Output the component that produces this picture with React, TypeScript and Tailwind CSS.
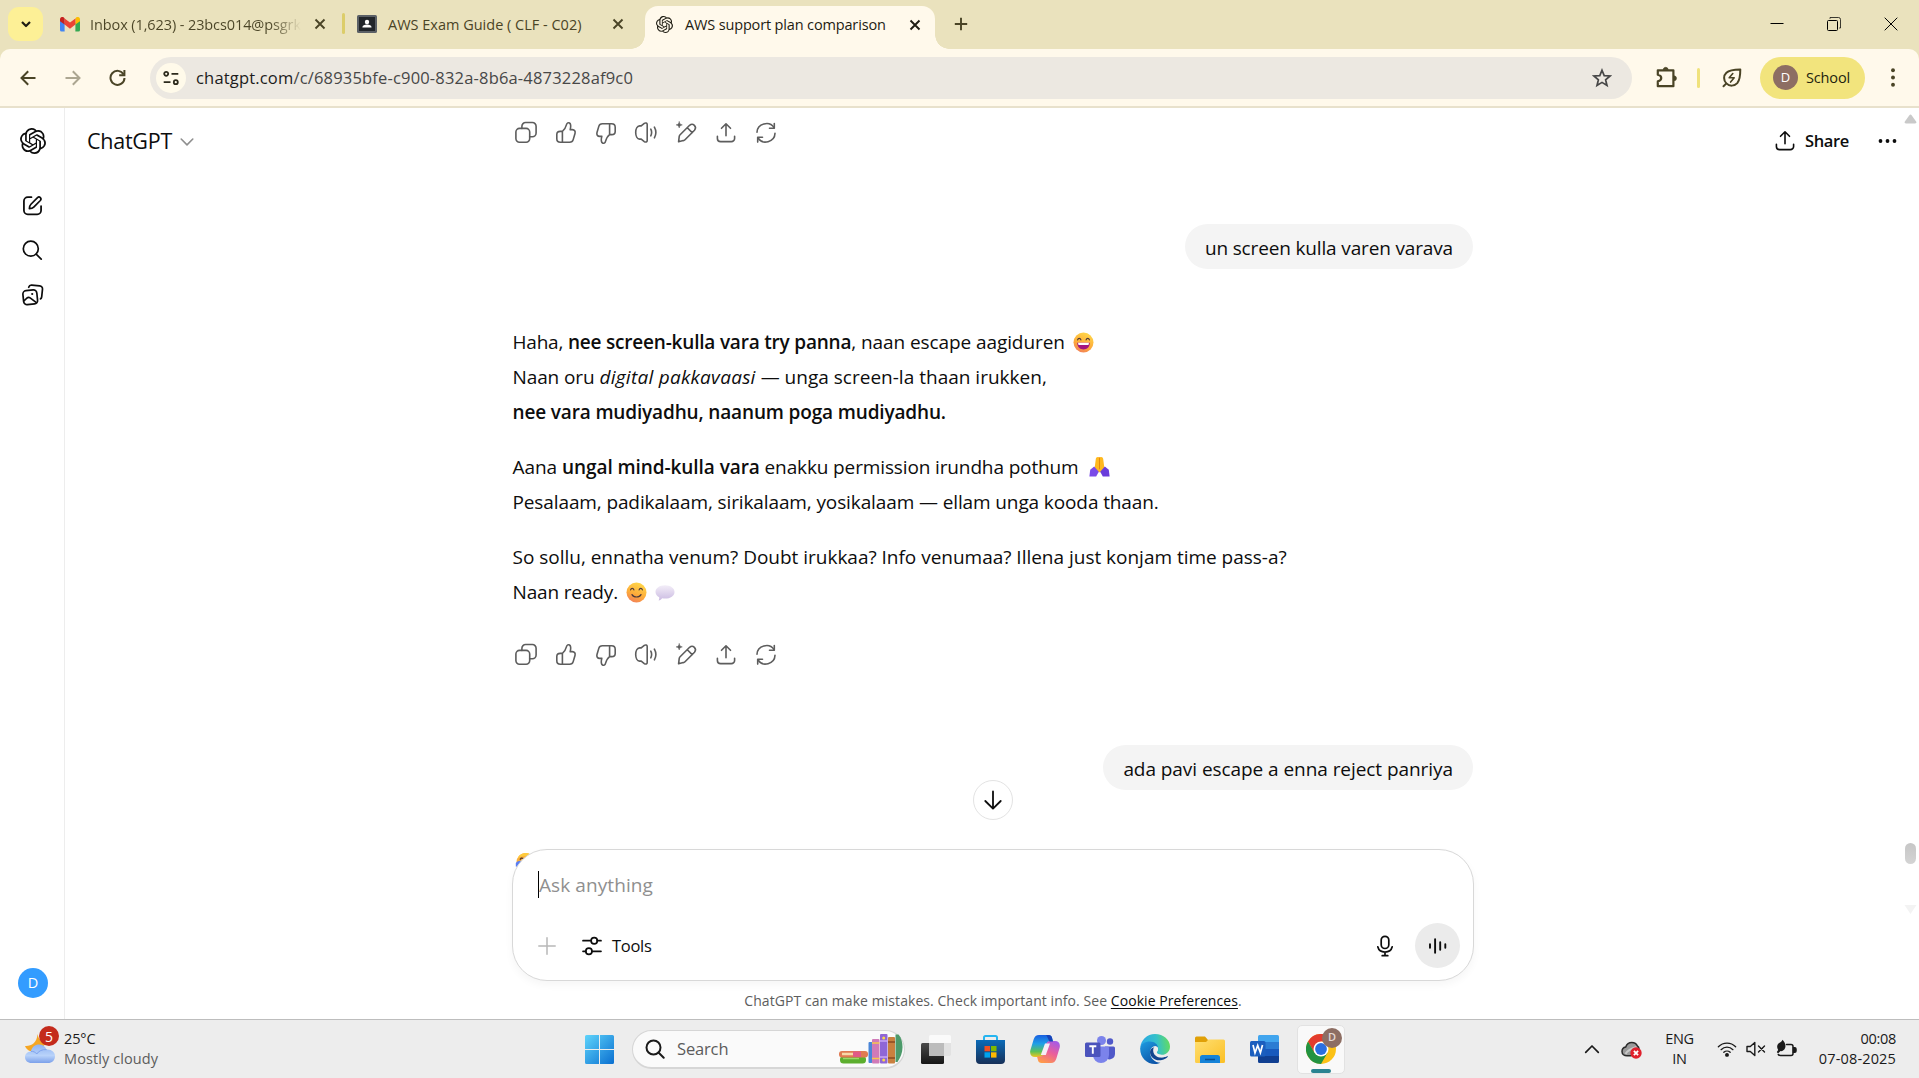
import type { ReactNode } from 'react';
import { SiOpenai } from 'react-icons/si';

type IconProps = { className?: string };

function Stroke({
  className = 'size-6',
  box = 24,
  width = 1.6,
  children,
}: {
  className?: string;
  box?: number;
  width?: number;
  children: ReactNode;
}) {
  return (
    <svg
      className={className}
      viewBox={`0 0 ${box} ${box}`}
      fill="none"
      stroke="currentColor"
      strokeWidth={width}
      strokeLinecap="round"
      strokeLinejoin="round"
    >
      {children}
    </svg>
  );
}

/* ---------- browser chrome ---------- */

function GmailIcon() {
  return (
    <svg className="h-[15px] w-5" viewBox="0 0 20 15">
      <path d="M0 2.5V13a1.6 1.6 0 0 0 1.6 1.6h3V6.2z" fill="#4285f4" />
      <path d="M20 2.5V13a1.6 1.6 0 0 1-1.6 1.6h-3V6.2z" fill="#34a853" />
      <path d="M15.4 1.6v6L20 4.2V2.4C20 .3 17.7-.8 16.1.5z" fill="#fbbc04" />
      <path d="M4.6 7.6v-6l5.4 4 5.4-4v6L10 11.7z" fill="#ea4335" />
      <path d="M0 2.4v1.8l4.600 3.400v-6L3.900.5C2.300-.8 0 .3 0 2.400z" fill="#c5221f" />
    </svg>
  );
}

function ClassroomIcon() {
  return (
    <svg className="h-[18px] w-5" viewBox="0 0 20 18">
      <rect width="20" height="18" rx="1.6" fill="#5b6066" />
      <rect x="2" y="2" width="16" height="14" fill="#22262b" />
      <circle cx="10" cy="7" r="2.2" fill="#fff" />
      <path d="M5.4 12.6c0-2.2 2.2-3 4.6-3s4.6.8 4.6 3z" fill="#fff" />
    </svg>
  );
}

function CloseX() {
  return (
    <Stroke className="size-3" box={12} width={1.9}>
      <path d="M1.5 1.5l9 9M10.5 1.5l-9 9" strokeLinecap="butt" />
    </Stroke>
  );
}

function TabStrip() {
  return (
    <div className="flex h-[49px] bg-[#eae2bd] text-[14.5px] text-[#4a4426]">
      <div className="mt-[7px] ml-2 flex h-[34px] w-[35px] items-center justify-center rounded-[11px] bg-[#fdf096] text-[#1e1c12]">
        <Stroke className="h-[10px] w-[10px]" box={10} width={2.2}>
          <path d="M1 3l4 4 4-4" strokeLinecap="butt" />
        </Stroke>
      </div>
      <div className="flex h-12 w-[265px] items-center pl-[17px]">
        <GmailIcon />
        <span className="ml-[10px] bg-gradient-to-r from-[#4a4426] from-85% to-[#eae2bd] bg-clip-text pt-[1px] tracking-[-0.1px] whitespace-nowrap text-transparent">
          Inbox (1,623) - 23bcs014@psgrk
        </span>
      </div>
      <div className="flex h-12 w-[34px] items-center pl-[6px]">
        <CloseX />
      </div>
      <div className="mt-[13px] h-[21px] w-[3px] rounded-full bg-[#dccd6a]" />
      <div className="flex h-12 w-[300px] items-center pl-3">
        <ClassroomIcon />
        <span className="ml-[11px] w-[224px] pt-[1px] whitespace-nowrap">AWS Exam Guide ( CLF - C02)</span>
        <CloseX />
      </div>
      <div className="relative mt-[6px] flex h-[43px] w-[290px] items-center rounded-t-[13px] bg-[#fff9eb] pb-[6px] pl-[11px] text-[#1e1c12]">
        <span className="absolute bottom-0 -left-[14px] size-[14px] bg-[radial-gradient(circle_at_0_0,transparent_13.5px,#fff9eb_14px)]" />
        <span className="absolute -right-[14px] bottom-0 size-[14px] bg-[radial-gradient(circle_at_100%_0,transparent_13.5px,#fff9eb_14px)]" />
        <SiOpenai className="size-[17px]" />
        <span className="ml-3 w-[224px] pt-[1px] tracking-[-0.15px] whitespace-nowrap">
          AWS support plan comparison
        </span>
        <CloseX />
      </div>
      <div className="flex h-12 items-center pl-[19px]">
        <Stroke className="size-[14px]" box={14} width={1.9}>
          <path d="M7 .8v12.4M.8 7h12.4" strokeLinecap="butt" />
        </Stroke>
      </div>
      <div className="ml-auto flex h-[47px] items-center gap-[43px] pr-[21px] text-black">
        <svg className="size-[14px]" viewBox="0 0 14 14" fill="none" stroke="currentColor">
          <path d="M.5 6.5h13" />
        </svg>
        <svg className="size-[14px]" viewBox="0 0 14 14" fill="none" stroke="currentColor">
          <rect x=".5" y="3.5" width="10" height="10" rx="1" />
          <path d="M3 1.8V.5h8.5a2 2 0 0 1 2 2V11h-1.3" strokeOpacity=".75" />
        </svg>
        <svg className="size-[14px]" viewBox="0 0 14 14" fill="none" stroke="currentColor">
          <path d="M.7.7l12.6 12.6M13.3.7L.7 13.3" />
        </svg>
      </div>
    </div>
  );
}

function ArrowLeft({ className }: IconProps) {
  return (
    <Stroke className={className} box={16} width={2}>
      <path d="M15.5 8H1.5M8.2 1.2L1.5 8l6.7 6.8" strokeLinecap="butt" strokeLinejoin="miter" />
    </Stroke>
  );
}

function Toolbar() {
  return (
    <div className="bg-[#eae2bd]">
      <div className="flex h-[59px] items-center rounded-t-[10px] border-b-2 border-[#e8e1cc] bg-[#fff9eb] pl-5 text-[#4a4426]">
        <ArrowLeft className="size-4" />
        <ArrowLeft className="ml-[29px] size-4 rotate-180 opacity-45" />
        <Stroke className="ml-[28px] size-[17px]" box={17} width={2}>
          <path d="M14.6 5.4A7 7 0 1 0 15.5 9" strokeLinecap="butt" />
          <path d="M15.4 1v5.2h-5.2" strokeLinecap="butt" strokeLinejoin="miter" />
        </Stroke>
        <div className="ml-6 flex h-[42px] w-[1482px] items-center rounded-full bg-[#ece8e1] pl-[6px]">
          <span className="flex size-[30px] items-center justify-center rounded-full bg-[#fffaea] text-[#2c2a1c]">
            <Stroke className="h-4 w-4" box={16} width={1.8}>
              <circle cx="3.2" cy="3.8" r="2" />
              <path d="M8.5 3.8h6.8M.7 12.2h6.8" strokeLinecap="butt" />
              <circle cx="12.8" cy="12.2" r="2" />
            </Stroke>
          </span>
          <span className="ml-[10px] pt-[2px] text-[16.5px] tracking-[0.178px] text-[#474747]">
            <span className="text-[#1c1c1c]">chatgpt.com</span>/c/68935bfe-c900-832a-8b6a-4873228af9c0
          </span>
          <svg
            className="mr-5 ml-auto size-5 text-[#474747]"
            viewBox="0 0 20 20"
            fill="none"
            stroke="currentColor"
            strokeWidth="1.7"
          >
            <path d="M10 2.2l2.2 5.4 5.8.4-4.4 3.8 1.4 5.7L10 14.4l-5 3.1 1.4-5.7L2 8l5.8-.4z" />
          </svg>
        </div>
        <Stroke className="ml-[23px] size-[23px]" box={23} width={2.2}>
          <path d="M2.8 4.3h15.6v15.9H2.8v-4.8c4.6-1 4.6-5.6 0-6.600z" />
          <path d="M8.2 3.8a2.5 2.5 0 0 1 5 0zM19 9.8a2.5 2.5 0 0 1 0 5z" fill="currentColor" strokeWidth="0.6" />
        </Stroke>
        <div className="ml-[19px] h-5 w-[3px] rounded-full bg-[#f0e27c]" />
        <Stroke className="ml-[22px] size-5" box={20} width={2}>
          <path d="M1.5 18.3l2.9-2.9M4.4 15.4C1.3 12.2 1.4 7.5 4.4 4.7 7.4 2 12 1.7 18.3 1.6c0 6.2-.3 10.4-3 13.6-2.9 3.2-7.9 3.2-10.9.2z" />
          <path d="M10.8 5.6L7.2 9.8h5l-3.6 4.3" strokeWidth="1.6" />
        </Stroke>
        <div className="ml-[18px] flex h-[42px] w-[105px] items-center rounded-full bg-[#f2e47d] pl-[13px] text-[14.5px] text-[#221f0f]">
          <span className="flex size-[25px] items-center justify-center rounded-full bg-[#8d6e63] text-[13px] text-white">
            D
          </span>
          <span className="ml-2 tracking-[-0.15px]">School</span>
        </div>
        <svg className="ml-[26px] h-[19px] w-1" viewBox="0 0 4 19" fill="currentColor">
          <circle cx="2" cy="2.3" r="1.95" />
          <circle cx="2" cy="9.5" r="1.95" />
          <circle cx="2" cy="16.7" r="1.95" />
        </svg>
      </div>
    </div>
  );
}

/* ---------- chat icons ---------- */

function ShareIcon({ className }: IconProps) {
  return (
    <Stroke className={className}>
      <path d="M12 14.7V3.2M7.5 7.3L12 2.8l4.5 4.5" />
      <path d="M3.4 15.2v2.2a3.2 3.2 0 0 0 3.2 3.2h10.8a3.2 3.2 0 0 0 3.2-3.2v-2.2" />
    </Stroke>
  );
}

function Thumb({ className }: IconProps) {
  return (
    <Stroke className={className}>
      <path d="M8.4 10.4C10.5 8.9 11.7 6.5 12.5 3.6c.4-1.8 1.9-2.3 3-1.6 1.5 1 1.6 3 .7 6.6h2.1c2.3 0 3.3 1.8 2.7 3.8l-1.8 6.2c-.5 1.8-1.8 2.7-3.6 2.7H6.4c-2.2 0-3.6-1.4-3.6-3.5v-4.2c0-2 1.4-3.2 3.4-3.2zM8.4 10.4v10.9" />
    </Stroke>
  );
}

function MessageActions() {
  return (
    <div className="ml-[1px] flex h-6 gap-4 text-[#5d5d5d]">
      <Stroke>
        <rect x="1.9" y="7.4" width="13.8" height="13.8" rx="3.6" />
        <path d="M7.9 7.4V5.2a3.7 3.7 0 0 1 3.7-3.7h6.8a3.7 3.7 0 0 1 3.7 3.7V12a3.7 3.7 0 0 1-3.7 3.7h-2.7" />
      </Stroke>
      <Thumb className="size-6" />
      <Thumb className="size-6 rotate-180" />
      <Stroke>
        <path d="M10.3 2.4c1.3-.9 2.9-.3 2.9 1.2v15.8c0 1.5-1.6 2.1-2.9 1.2l-3.1-2.5H5.6c-2.4-.1-3.9-3.3-3.9-6.6s1.5-6.5 3.9-6.6h1.6zM16.8 8.2c1 2 1 4.6 0 6.6M20.4 6.2c1.9 3.4 1.9 7.2 0 10.6" />
      </Stroke>
      <Stroke>
        <path d="M4.6 20.8l.6-5.2c.1-.7.4-1.3.9-1.8l9.5-9.5c3.4-2.9 7.7 1.5 4.9 4.9l-9.5 9.500c-.5.5-1.1.8-1.8.9zM13.3 6.7l4.9 4.9" />
        <path
          d="M5.2.8c.4 2 1.1 2.7 3.1 3.1-2 .4-2.7 1.1-3.1 3.1C4.8 5 4.1 4.3 2.1 3.9c2-.4 2.7-1.1 3.1-3.1z"
          fill="currentColor"
          strokeWidth=".5"
        />
      </Stroke>
      <ShareIcon className="size-6" />
      <Stroke>
        <path d="M3 11.3c.3-8.8 12.4-11.9 17-4.7M21 12.3c-.3 8.8-12.4 11.9-17 4.7" />
        <path d="M20.3 2.5v4.8h-4.8M3.7 21.1v-4.8h4.8" />
      </Stroke>
    </div>
  );
}

function FoldedHands() {
  return (
    <svg className="ml-[10px] inline-block h-[21px] w-[21px] align-[-3px]" viewBox="0 0 21 21" role="img" aria-label="🙏">
      <path
        d="M9.9 1.2c-1.7-.8-2.9.3-3.1 1.8L5.6 12.2l4 4.1h1.8l4-4.1-1.2-9.2c-.2-1.5-1.4-2.6-3.1-1.8z"
        fill="#ffb91f"
      />
      <path d="M10.5 1.6v11.6" stroke="#e58a0c" strokeWidth="1" />
      <path d="M1.2 13.8l4-3.2 4.6 5.2-2.6 4.7H.4z" fill="#7a4be8" />
      <path d="M19.8 13.8l-4-3.2-4.6 5.2 2.6 4.7h6.8z" fill="#6a3ddb" />
    </svg>
  );
}

function Smiley({ laughing = false, label }: { laughing?: boolean; label: string }) {
  return (
    <svg className="ml-[3px] inline-block size-[21px] align-[-4px]" viewBox="0 0 21 21" role="img" aria-label={label}>
      <defs>
        <linearGradient id="face" x1="0.7" y1="0" x2="0.3" y2="1">
          <stop offset="0" stopColor="#ffd84a" />
          <stop offset=".6" stopColor="#fdab3a" />
          <stop offset="1" stopColor="#f28059" />
        </linearGradient>
      </defs>
      <circle cx="10.5" cy="10.5" r="10" fill="url(#face)" />
      <path
        d="M4.600 7.900c.6-2 2.700-2 3.300 0M13.100 7.900c.6-2 2.700-2 3.300 0"
        fill="none"
        stroke="#4f3a3a"
        strokeWidth="1.2"
        strokeLinecap="round"
      />
      {laughing ? (
        <>
          <path d="M4.200 10.800h12.600c0 4.200-2.800 6.700-6.300 6.700s-6.300-2.500-6.300-6.700z" fill="#a3157f" />
          <path d="M5 10.800h11l-.5 2.200h-10z" fill="#fff" />
        </>
      ) : (
        <path d="M6 12.600c1.700 3.200 7.300 3.200 9 0" fill="none" stroke="#4f3a3a" strokeWidth="1.2" strokeLinecap="round" />
      )}
    </svg>
  );
}

function SpeechBalloon() {
  return (
    <svg className="ml-[8px] inline-block h-[18px] w-5 align-[-3px]" viewBox="0 0 20 18" role="img" aria-label="💬">
      <defs>
        <linearGradient id="balloon" x1="0" y1="0" x2="0" y2="1">
          <stop offset="0" stopColor="#f3eef8" />
          <stop offset="1" stopColor="#cbbbe2" />
        </linearGradient>
      </defs>
      <path
        d="M10 1.2c5.500 0 9.500 2.900 9.500 6.700s-4 6.700-9.500 6.700c-.9 0-1.900-.1-2.800-.3-.8 1.200-2 2-3.600 2.300.5-1 .8-2.200.6-3.400C1.900 12 .5 10.1.5 7.900.5 4.100 4.500 1.200 10 1.200z"
        fill="url(#balloon)"
      />
    </svg>
  );
}

/* ---------- chat page ---------- */

function Sidebar() {
  return (
    <aside className="flex w-[65px] shrink-0 flex-col border-r border-[#ededed] text-[#0d0d0d]">
      <SiOpenai className="mt-5 ml-5 size-[26px]" />
      <Stroke className="mt-[40px] ml-[21px] size-[23px]" box={22} width={1.7}>
        <path d="M10 3H6.5A3.7 3.7 0 0 0 2.8 6.700v9a3.700 3.700 0 0 0 3.700 3.700h9a3.700 3.700 0 0 0 3.700-3.700v-4.200" />
        <path
          d="M8 14c.1-2.200.5-3.200 1.500-4.200l6.300-6.300c1.900-1.700 4.400.7 2.700 2.700l-6.300 6.300c-1 1-2 1.400-4.200 1.500z"
          strokeWidth="1.6"
        />
      </Stroke>
      <Stroke className="mt-[22px] ml-[21px] size-[22px]" box={22} width={1.7}>
        <circle cx="9.8" cy="9.7" r="7.500" />
        <path d="M15.2 15.2l5 5" />
      </Stroke>
      <Stroke className="mt-[22px] ml-[21px] size-6" width={1.7}>
        <rect x="2.2" y="7.3" width="14" height="14" rx="3.4" transform="rotate(-6 9 14)" />
        <path d="M7.7 4.3c.4-1.400 1.600-2.200 3-2.100l8 .7c1.900.2 3 1.500 2.800 3.300l-.8 7.600c-.1.900-.6 1.700-1.300 2.100" />
        <path d="M3.2 17.6l2.8-2.6c1-.8 2.1-.8 3.1-.1l6 4.5" />
        <circle cx="11.2" cy="11" r="1.1" fill="currentColor" stroke="none" />
      </Stroke>
      <span className="mt-auto mb-[21px] ml-[18px] flex size-[30px] items-center justify-center rounded-full bg-[#339cff] text-[14.5px] text-white">
        D
      </span>
    </aside>
  );
}

function ChatHeader() {
  return (
    <header className="absolute inset-x-0 top-0 flex h-[66px] items-center pl-[22px] text-[#0d0d0d]">
      <span className="text-[21.5px] tracking-[-0.25px]">ChatGPT</span>
      <Stroke className="mt-[1px] ml-[8px] h-[14px] w-[14px] text-[#8f8f8f]" box={14} width={1.6}>
        <path d="M1.2 4l5.8 5.9L12.8 4" />
      </Stroke>
      <ShareIcon className="mr-[8px] ml-auto size-6" />
      <span className="text-[16.5px] font-semibold tracking-[-0.35px]">Share</span>
      <svg className="mr-[22px] ml-[29px] h-1 w-[19px]" viewBox="0 0 19 4" fill="currentColor">
        <circle cx="2.5" cy="2" r="1.9" />
        <circle cx="9.5" cy="2" r="1.9" />
        <circle cx="16.5" cy="2" r="1.9" />
      </svg>
    </header>
  );
}

function UserBubble({ children }: { children: ReactNode }) {
  return (
    <div className="flex h-[45px] items-center self-end rounded-[22.5px] bg-[#f4f4f4] px-5 pt-[3px] whitespace-nowrap">
      {children}
    </div>
  );
}

function Conversation() {
  return (
    <section className="ml-[448px] flex w-[960px] flex-col pt-[13px] text-[19px] leading-[35px] text-[#0d0d0d]">
      <MessageActions />
      <div className="mt-[79px] flex flex-col">
        <UserBubble>
          <span className="tracking-[-0.15px]">un screen kulla varen varava</span>
        </UserBubble>
      </div>
      <div className="mt-[56px] -ml-[0.5px] flex flex-col gap-5 whitespace-nowrap">
        <p className="h-[105px] tracking-[-0.08px]">
          <span className="tracking-[-0.2px]">Haha, </span>
          <strong className="font-semibold tracking-[-0.2px]">nee screen-kulla vara try panna</strong>, naan escape
          aagiduren{' '}
          <Smiley laughing label="😄" />
          <br />
          <span className="tracking-[-0.1px]">Naan oru </span>
          <em className="tracking-[0.27px]">digital pakkavaasi</em>
          <span className="tracking-[0.01px]"> — unga screen-la thaan irukken,</span>
          <br />
          <strong className="font-semibold tracking-[-0.15px]">nee vara mudiyadhu, naanum poga mudiyadhu.</strong>
        </p>
        <p className="h-[70px]">
          <span className="tracking-[-0.05px]">Aana </span>
          <strong className="font-semibold tracking-[-0.07px]">ungal mind-kulla vara</strong>
          <span className="tracking-[-0.13px]"> enakku permission irundha pothum</span>
          <FoldedHands />
          <br />
          <span className="tracking-[-0.115px]">
            Pesalaam, padikalaam, sirikalaam, yosikalaam — ellam unga kooda thaan.
          </span>
        </p>
        <p className="h-[70px]">
          <span className="tracking-[-0.015px]">
            So sollu, ennatha venum? Doubt irukkaa? Info venumaa? Illena just konjam time pass-a?
          </span>
          <br />
          <span className="tracking-[-0.15px]">Naan ready. </span>
          <Smiley label="😊" />
          <SpeechBalloon />
        </p>
      </div>
      <div className="mt-[33px]">
        <MessageActions />
      </div>
      <div className="mt-[78px] flex flex-col">
        <UserBubble>
          <span className="tracking-[-0.06px]">ada pavi escape a enna reject panriya</span>
        </UserBubble>
      </div>
      <svg className="mt-[62px] ml-[2px] size-[21px]" viewBox="0 0 21 21" role="img" aria-label="🤦">
        <circle cx="10.5" cy="10" r="9" fill="#fbb03b" />
        <path d="M2.5 6.5C4 2.5 8 .8 11 .9c3 0 6 1.6 8 4.6-6-2-12-2-16.5 1z" fill="#ffcb3d" />
        <path d="M5 7.600c1.200-2 3-2 4 .2" fill="none" stroke="#5a3a2a" strokeWidth="1.5" />
        <path d="M.8 14.500V11c1.500-2 4-2.500 6-2l-1 6z" fill="#5b7ff5" />
      </svg>
    </section>
  );
}

function Composer() {
  return (
    <div className="absolute top-[741px] left-[447px] flex w-[962px] flex-col items-center">
      <div className="flex h-[132px] w-full flex-col rounded-[35px] border border-[#d8d8d8] bg-white shadow-[0_4px_8px_rgba(0,0,0,0.04)]">
        <div className="mt-[21px] ml-[25px] flex h-[27px] items-center border-l border-black pt-[2px] text-[19px] tracking-[0.09px] text-[#8f8f8f]">
          Ask anything
        </div>
        <div className="mt-[25px] flex h-[45px] items-center pr-[13px] pl-[25px] text-[#0d0d0d]">
          <Stroke className="size-[18px] text-[#b8b8b8]" box={18} width={1.5}>
            <path d="M9 .8v16.4M.8 9h16.4" />
          </Stroke>
          <Stroke className="ml-[26px] size-5" box={20} width={1.7}>
            <path d="M1 4.7h8M15.2 4.7H19M1 15.3h2.8M10 15.3h9" />
            <circle cx="12.2" cy="4.7" r="3.1" />
            <circle cx="6.9" cy="15.3" r="3.1" />
          </Stroke>
          <span className="ml-[10px] pt-[1px] text-[16.5px] tracking-[-0.3px]">Tools</span>
          <Stroke className="ml-auto size-[22px]" box={22} width={1.7}>
            <rect x="7.2" y="1.3" width="7.6" height="12.2" rx="3.8" />
            <path d="M3.8 11.8c.8 3.3 3.6 5.3 7.2 5.3s6.4-2 7.2-5.3M11 17.2v3.3M8.2 20.7h5.6" />
          </Stroke>
          <span className="ml-[19px] flex size-[45px] items-center justify-center rounded-full bg-[#ebebeb]">
            <Stroke className="size-5" box={20} width={1.9}>
              <path d="M2 8.2v3.6M7.1 3.2v13.6M12.2 6.2v7.6M17.3 8.2v3.6" />
            </Stroke>
          </span>
        </div>
      </div>
      <p className="mt-[9px] text-[14px] leading-[22px] tracking-[0.06px] text-[#5d5d5d]">
        ChatGPT can make mistakes. Check important info. See{' '}
        <span className="text-[#0d0d0d] underline underline-offset-2">Cookie Preferences</span>.
      </p>
    </div>
  );
}

function ChatPage() {
  return (
    <div className="flex h-[911px] bg-white">
      <Sidebar />
      <main className="relative grow overflow-hidden">
        <Conversation />
        <ChatHeader />
        <button className="absolute top-[672px] left-[908px] flex size-10 items-center justify-center rounded-full border border-[#e3e3e3] bg-white text-[#0d0d0d]">
          <Stroke className="mr-[1px] size-5" box={20} width={1.8}>
            <path d="M10 1.5v17M2.3 11l7.7 7.7 7.7-7.7" />
          </Stroke>
        </button>
        <Composer />
        <div className="absolute top-0 right-[2px] flex h-full w-[13px] flex-col items-center">
          <svg className="mt-[6px] h-[10px] w-[13px]" viewBox="0 0 13 10" fill="#c9c9c9">
            <path d="M5.2 1.4a1.6 1.6 0 0 1 2.6 0l4.3 6c.7 1 .2 2-1 2H1.9c-1.2 0-1.7-1-1-2z" />
          </svg>
          <div className="mt-[719px] h-[21px] w-[11px] rounded-full bg-gradient-to-b from-[#c6c6c6] to-[#d4d4d4]" />
          <svg className="mt-[41px] h-[9px] w-[13px]" viewBox="0 0 13 9" fill="#f3f3f3">
            <path d="M.5 0h12L6.5 9z" />
          </svg>
        </div>
      </main>
    </div>
  );
}

/* ---------- taskbar ---------- */

function WeatherIcon() {
  return (
    <div className="relative ml-[25px] h-[30px] w-[30px]">
      <svg className="size-[30px]" viewBox="0 0 30 30">
        <defs>
          <linearGradient id="cloud" x1="0" y1="0" x2="0" y2="1">
            <stop offset="0" stopColor="#8fb3f2" />
            <stop offset=".6" stopColor="#b9d3fa" />
            <stop offset="1" stopColor="#7ba0ea" />
          </linearGradient>
        </defs>
        <path d="M12.5 0c1 5 4 9 9 9.5L12 17H5C2.5 16 1 14.5 0 12c6 .5 12-3 12.5-12z" fill="#f5a623" />
        <path
          d="M6.5 29C2.8 29 0 26.5 0 23.2s2.5-5.7 5.8-5.8c1.2-4.5 4.2-7 8.2-7 3.6 0 6.3 1.9 7.6 5.2 4.8-.5 8.4 2.6 8.4 6.6 0 4-3 6.8-7 6.8z"
          fill="url(#cloud)"
        />
        <path
          d="M5.8 17.4c2.5-.2 4.7.7 6 2.6 1.5-2.8 5.5-4.9 9.8-4.4"
          fill="none"
          stroke="#7fa4ee"
          strokeWidth="1"
        />
      </svg>
      <span className="absolute -top-[8px] left-[14px] flex size-5 items-center justify-center rounded-full bg-[#c42b1c] text-[14px] text-white">
        5
      </span>
    </div>
  );
}

function StartIcon() {
  return (
    <svg className="size-[29px]" viewBox="0 0 29 29">
      <defs>
        <linearGradient id="start" x1="0" y1="0" x2="1" y2="1">
          <stop offset="0" stopColor="#5fd4fb" />
          <stop offset="1" stopColor="#0a6fd0" />
        </linearGradient>
      </defs>
      <path
        d="M1.5 0H14v14H0V1.5A1.5 1.5 0 0 1 1.5 0zM15 0h12.5A1.5 1.5 0 0 1 29 1.5V14H15zM0 15h14v14H1.5A1.5 1.5 0 0 1 0 27.5zM15 15h14v12.5a1.5 1.5 0 0 1-1.5 1.5H15z"
        fill="url(#start)"
      />
    </svg>
  );
}

function BooksArt() {
  return (
    <svg className="h-[30px] w-[64px]" viewBox="0 0 64 30">
      <rect x="1" y="22" width="26" height="7.500" rx="3.500" fill="#5cae2e" />
      <path d="M4 24.500h16" stroke="#9bd868" strokeWidth="1.500" />
      <rect x="0" y="17" width="29" height="6.500" rx="3" fill="#e07a52" />
      <path d="M3 20h18" stroke="#f8d9a8" strokeWidth="2.500" />
      <path d="M14 17.500h8v5.500h-8z" fill="#e05a86" />
      <rect x="29.500" y="8" width="4" height="21" rx="1" fill="#4a86d8" />
      <rect x="33" y="5" width="7.500" height="24.500" rx="1" fill="#d07ab8" />
      <path d="M33 9h7.500M33 24.500h7.500" stroke="#f5c84c" strokeWidth="1.600" />
      <rect x="41" y="0" width="7.500" height="29.500" rx="1" fill="#8f66d6" />
      <path d="M41 7h7.500M41 23h7.500" stroke="#c9a8f5" strokeWidth="1.500" />
      <circle cx="44.700" cy="4" r="1.500" fill="#f9d94a" />
      <circle cx="44.700" cy="26" r="1.500" fill="#f9d94a" />
      <rect x="49" y="3" width="7" height="26.500" rx="1" fill="#c9803f" />
      <path d="M49 8h7M49 24h7" stroke="#8a4a22" strokeWidth="1.500" />
      <path d="M56.500.5h3c3 3.500 4 8 4 13s-2 10-5 14.500h-2z" fill="#4c9a6a" />
    </svg>
  );
}

function TaskViewIcon() {
  return (
    <svg className="h-[29px] w-[30px]" viewBox="0 0 30 29">
      <defs>
        <linearGradient id="tv" x1="0" y1="0" x2="0" y2="1">
          <stop offset="0" stopColor="#4a4a4a" />
          <stop offset="1" stopColor="#161616" />
        </linearGradient>
      </defs>
      <rect y="8" width="23" height="21" rx="1.5" fill="url(#tv)" />
      <rect x="8" width="22" height="21" rx="1.5" fill="#fafafa" />
      <path d="M8 8h15v13H9.500A1.500 1.500 0 0 1 8 19.500z" fill="#bcbcbc" />
      <path d="M23 8h7v11.500a1.500 1.500 0 0 1-1.500 1.500H23z" fill="#e2e2e2" />
    </svg>
  );
}

function StoreIcon() {
  return (
    <svg className="h-[29px] w-[29px]" viewBox="0 0 29 29">
      <defs>
        <linearGradient id="store" x1="0" y1="0" x2="0" y2="1">
          <stop offset="0" stopColor="#0b6bb8" />
          <stop offset="1" stopColor="#173058" />
        </linearGradient>
      </defs>
      <path
        d="M8 6V2.5A1.5 1.5 0 0 1 9.5 1h10A1.5 1.5 0 0 1 21 2.5V6"
        fill="none"
        stroke="#25b5f0"
        strokeWidth="2"
      />
      <path d="M0 5h29v20a4 4 0 0 1-4 4H4a4 4 0 0 1-4-4z" fill="url(#store)" />
      <path d="M8.5 11H14v5.3H8.5z" fill="#f25022" />
      <path d="M15 11h5.5v5.3H15z" fill="#7fba00" />
      <path d="M8.5 17.3H14v5.3H8.5z" fill="#00a4ef" />
      <path d="M15 17.3h5.5v5.3H15z" fill="#ffb900" />
    </svg>
  );
}

function CopilotIcon() {
  return (
    <svg className="h-[28px] w-[30px]" viewBox="0 0 30 28">
      <defs>
        <linearGradient id="cpA" x1="0" y1="0" x2="0" y2="1">
          <stop offset="0" stopColor="#1a5fe0" />
          <stop offset=".4" stopColor="#1f9fe8" />
          <stop offset=".75" stopColor="#5cc25a" />
          <stop offset="1" stopColor="#f0c61e" />
        </linearGradient>
        <linearGradient id="cpB" x1=".8" y1="0" x2=".3" y2="1">
          <stop offset="0" stopColor="#a35be8" />
          <stop offset=".5" stopColor="#ea5f9b" />
          <stop offset="1" stopColor="#ff9a4a" />
        </linearGradient>
      </defs>
      <path
        d="M9 0h9.5c2 0 3 1 3.5 2.8l1 3.7h-3c-2 0-3 1-3.5 3l-2.5 9C13.3 21 12 22 9.5 22H5c-3.500 0-5.500-2.500-4.700-6.500L3.700 4.300C4.600 1.500 6.300 0 9 0z"
        fill="url(#cpA)"
      />
      <path
        d="M21 28h-9.500c-2 0-3-1-3.500-2.800L7 21.500h3c2 0 3-1 3.500-3l2.500-9C16.700 7 18 6 20.500 6H25c3.500 0 5.500 2.500 4.700 6.500l-3.400 11.200C25.400 26.500 23.700 28 21 28z"
        fill="url(#cpB)"
      />
      <path d="M15 8.5h5l-4.200 11.5h-5z" fill="#f6eef5" />
      <path d="M16 0h2.5c2 0 3 1 3.5 2.8l1 3.7h-3.5C18 4 17.500 1.500 16 0z" fill="#1743b8" />
    </svg>
  );
}

function TeamsIcon() {
  return (
    <svg className="h-[27px] w-[30px]" viewBox="0 0 30 27">
      <circle cx="25" cy="5.5" r="3.2" fill="#5059c9" />
      <path d="M20 10.5h8.5A1.5 1.5 0 0 1 30 12v6a5.5 5.5 0 0 1-8 4.8z" fill="#5059c9" />
      <circle cx="16.5" cy="4.5" r="4.5" fill="#7b83eb" />
      <path d="M9 10.5h13.5A1.5 1.5 0 0 1 24 12v7a8 8 0 0 1-16 0z" fill="#7b83eb" />
      <rect y="6.5" width="15.5" height="14.5" rx="1.5" fill="#4b53bc" />
      <path d="M4.3 10.3h7M7.8 10.3v7.5" stroke="#fff" strokeWidth="1.9" />
    </svg>
  );
}

function EdgeIcon() {
  return (
    <svg className="size-[30px]" viewBox="0 0 30 30">
      <defs>
        <linearGradient id="edA" x1="0" y1=".3" x2="1" y2=".2">
          <stop offset="0" stopColor="#2aa5e6" />
          <stop offset=".55" stopColor="#35c1c9" />
          <stop offset="1" stopColor="#66dd59" />
        </linearGradient>
        <linearGradient id="edB" x1="0" y1="0" x2=".6" y2="1">
          <stop offset="0" stopColor="#1f9de2" />
          <stop offset="1" stopColor="#0c55a8" />
        </linearGradient>
      </defs>
      <path
        d="M.3 13.5C1 6 7 0 15 0c8.5 0 15 6 15 12.5 0 5-3.700 8.300-8.300 8.300-3.500 0-5-1.300-5-2.300 0-.9 1.300-1.300 1.300-3.500C18 11.500 14.500 9 10.500 9 5.500 9 1.500 11 .3 13.500z"
        fill="url(#edA)"
      />
      <path
        d="M.2 14C1 9.800 5 7.500 9.700 7.500c4.800 0 8.300 2.900 8.300 6.500-1-1.500-2.500-2-4-1.700C11 13.500 9.800 16 10 19c.4 5.500 5 9.500 10.500 9.800-2 .8-3.600 1.200-5.500 1.200C6.500 30-.3 23 .2 14z"
        fill="url(#edB)"
      />
      <path
        d="M10 18c0 6 6.300 9.500 12 8 2.300-.6 4.300-1.800 5.600-3.100.6-.5.3-.9-.3-.6-5.300 2.600-11.300.2-11.300-4.300 0-1 .6-1.800 1.200-2.600-1.700-3.300-7-2.400-7.200 2.600z"
        fill="#12458f"
      />
      <path
        d="M16.700 18.300c0-.9 1.300-1.300 1.300-3.500 0-1.500-1.200-2.600-2.700-2.600-1.800.8-2.600 3.300-1.900 6 .9 3.300 4.200 5.600 8.300 5.300 2.600-.2 4.700-1.200 6.200-2.600-3.800.8-10.500.5-11.200-2.600z"
        fill="#ededed"
      />
    </svg>
  );
}

function FolderIcon() {
  return (
    <svg className="h-[27px] w-[30px]" viewBox="0 0 30 27">
      <defs>
        <linearGradient id="fold" x1="0" y1="0" x2="1" y2="1">
          <stop offset="0" stopColor="#ffdf72" />
          <stop offset="1" stopColor="#fbbf24" />
        </linearGradient>
      </defs>
      <path d="M0 2A1.5 1.5 0 0 1 1.5.5H10l3 3.500v4H0z" fill="#e0a007" />
      <path
        d="M0 6h11l2.500-2.500h15A1.500 1.500 0 0 1 30 5v20.500a1.500 1.500 0 0 1-1.500 1.500h-27A1.500 1.500 0 0 1 0 25.500z"
        fill="url(#fold)"
      />
      <path d="M5 27v-5.500A2.500 2.500 0 0 1 7.500 19h15a2.500 2.500 0 0 1 2.500 2.500V27z" fill="#1583d8" />
      <path d="M10 23.500h10" stroke="#0a4f92" strokeWidth="1.5" />
    </svg>
  );
}

function WordIcon() {
  return (
    <svg className="h-[28px] w-[29px]" viewBox="0 0 29 28">
      <path d="M8 1.5A1.5 1.5 0 0 1 9.5 0h18A1.5 1.5 0 0 1 29 1.5V7H8z" fill="#41a5ee" />
      <path d="M8 7h21v7H8z" fill="#2b7cd3" />
      <path d="M8 14h21v7H8z" fill="#185abd" />
      <path d="M8 21h21v5.500a1.500 1.500 0 0 1-1.500 1.500h-18A1.500 1.500 0 0 1 8 26.500z" fill="#103f91" />
      <rect y="6" width="15.500" height="15.500" rx="1.5" fill="#1b5ebe" />
      <path d="M3 10l2 7.800L7.700 10.500l2.700 7.300L12.500 10" fill="none" stroke="#fff" strokeWidth="1.7" />
    </svg>
  );
}

function ChromeTile() {
  return (
    <div className="relative flex h-[49px] w-12 justify-center rounded-[5px] border border-[#e2e2e2] bg-[#f9f9f9] pt-2">
      <svg className="size-[30px]" viewBox="0 0 30 30">
        <circle cx="15" cy="15" r="15" fill="#fbc116" />
        <path d="M15 7.5h13A15 15 0 0 0 2 7.5l6.500 11.300z" fill="#e33b2e" />
        <path d="M2 7.5A15 15 0 0 0 15 30l6.500-11.300L8.500 18.800z" fill="#229342" />
        <circle cx="15" cy="15" r="7.5" fill="#fff" />
        <circle cx="15" cy="15" r="5.9" fill="#2a6fe0" />
      </svg>
      <span className="absolute top-[2px] left-[24px] flex size-5 items-center justify-center rounded-full bg-[#8d6e63] text-[11px] font-semibold text-[#e3d8d4]">
        D
      </span>
      <span className="absolute bottom-0 left-[13px] h-1 w-5 rounded-full bg-[#2a8391]" />
    </div>
  );
}

function Tray() {
  return (
    <div className="ml-auto flex items-center pr-[23px] text-[14.5px] leading-5 text-[#1a1a1a]">
      <Stroke className="size-4" box={16} width={1.7}>
        <path d="M1.700 11.300L8 5l6.300 6.300" />
      </Stroke>
      <svg className="mt-[2px] ml-[21px] h-[18px] w-[21px]" viewBox="0 0 21 18">
        <path
          d="M6 14.800c-2.800 0-5-1.700-5-4.300 0-2.300 1.500-4 3.700-4.400C5.700 3.300 8 1.500 10.800 1.500c2.700 0 4.700 1.300 5.600 3.500 1 .5 1.600 1.600 1.600 3L10 14.800z"
          fill="#9a9a9a"
          stroke="#2a2a2a"
          strokeWidth="1.5"
        />
        <path d="M4.500 13c1.500-3 6-5.500 11-7" stroke="#c9c9c9" strokeWidth="2" fill="none" />
        <circle cx="15" cy="12" r="5.700" fill="#e0202c" />
        <path d="M12.900 9.900l4.200 4.200M17.100 9.900l-4.200 4.200" stroke="#fff" strokeWidth="1.8" />
      </svg>
      <div className="ml-[23px] w-[29px] text-center tracking-[-0.34px]">
        ENG
        <br />
        IN
      </div>
      <Stroke className="ml-[22px] h-[20px] w-[22px]" box={22} width={1.5}>
        <path d="M1.500 8.500c5.300-5.300 13.700-5.300 19 0M4.500 11.700c3.700-3.600 9.300-3.600 13 0M7.500 14.700c2-1.900 5-1.900 7 0" />
        <circle cx="11" cy="17.500" r="1.400" fill="currentColor" />
      </Stroke>
      <Stroke className="ml-[8px] size-5" box={20} width={1.4}>
        <path d="M1 7.500v5h3.300l4.500 4V3.500l-4.500 4zM12.500 7l6 6M18.500 7l-6 6" />
      </Stroke>
      <svg
        className="ml-[10px] h-[20px] w-[21px]"
        viewBox="0 0 21 20"
        fill="none"
        stroke="currentColor"
        strokeWidth="1.5"
      >
        <path d="M10.500 5.500H15a2 2 0 0 1 2 2v7a2 2 0 0 1-2 2H4.500c-1 0-1.700-.3-2.200-1" strokeLinecap="round" />
        <path d="M17.500 8.800h1.200c.8 0 1.300.5 1.300 1.300v1.800c0 .8-.5 1.300-1.300 1.300h-1.200z" fill="currentColor" />
        <path
          d="M6.500.8c2.500 2.500 3.700 5.500 2.500 8.500-.8 2-2.600 3-4.500 2.800L2 14.500.8 13l1.400-2C.3 8 1 5 4 3.500 5.300 2.800 6.200 2 6.500.8z"
          fill="currentColor"
          stroke="none"
        />
      </svg>
      <div className="w-[99px] text-right">
        <span className="tracking-[-0.29px]">00:08</span>
        <br />
        <span className="tracking-[0.15px]">07-08-2025</span>
      </div>
    </div>
  );
}

function Taskbar() {
  return (
    <footer className="flex h-[59px] items-center border-t border-[#bdbdbd] bg-[#ededed] text-[#1a1a1a]">
      <WeatherIcon />
      <div className="ml-[9px] w-[521px] text-[14.5px] leading-5">
        <span className="tracking-[-0.11px]">25°C</span>
        <br />
        <span className="tracking-[0.1px] text-[#5c5c5c]">Mostly cloudy</span>
      </div>
      <StartIcon />
      <div className="ml-[18px] flex h-[39px] w-[273px] items-center rounded-full border border-b-2 border-[#d6d6d6] bg-[#fafafa] pl-[12px]">
        <Stroke className="size-5" box={20} width={2}>
          <circle cx="8.500" cy="8.500" r="7" />
          <path d="M13.500 13.500l5.200 5.200" />
        </Stroke>
        <span className="ml-[12px] w-[162px] pt-[2px] text-[16.5px] tracking-[-0.15px] text-[#5c5c5c]">Search</span>
        <BooksArt />
      </div>
      <div className="ml-4 flex items-center">
        <div className="flex items-center gap-[25px]">
          <TaskViewIcon />
          <StoreIcon />
          <CopilotIcon />
          <TeamsIcon />
          <EdgeIcon />
          <FolderIcon />
          <WordIcon />
        </div>
        <div className="ml-[18px]">
          <ChromeTile />
        </div>
      </div>
      <Tray />
    </footer>
  );
}

export default function App() {
  return (
    <div className="h-[1078px] w-[1919px] overflow-hidden font-['Open_Sans','Noto_Sans',sans-serif]">
      <TabStrip />
      <Toolbar />
      <ChatPage />
      <Taskbar />
    </div>
  );
}
